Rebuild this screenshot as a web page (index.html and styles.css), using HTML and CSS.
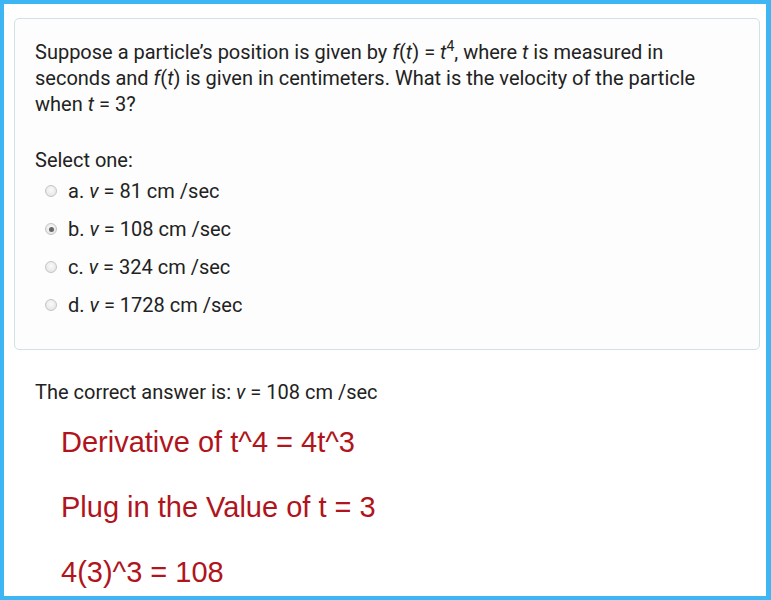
FILE: index.html
```html
<!DOCTYPE html>
<html>
<head>
<meta charset="utf-8">
<link rel="stylesheet" href="styles.css">
</head>
<body>
<div class="frame">
  <div class="card">
    <p class="question">Suppose a particle’s position is given by <i>f</i>(<i>t</i>) = <i>t</i><sup>4</sup>, where <i>t</i> is measured in seconds and <i>f</i>(<i>t</i>) is given in centimeters. What is the velocity of the particle when <i>t</i> = 3?</p>
    <div class="prompt">Select one:</div>
    <div class="options">
      <div class="opt"><span class="radio"></span><span>a. <i>v</i> = 81 cm /sec</span></div>
      <div class="opt"><span class="radio checked"></span><span>b. <i>v</i> = 108 cm /sec</span></div>
      <div class="opt"><span class="radio"></span><span>c. <i>v</i> = 324 cm /sec</span></div>
      <div class="opt"><span class="radio"></span><span>d. <i>v</i> = 1728 cm /sec</span></div>
    </div>
  </div>
  <div class="answer">The correct answer is: <i>v</i> = 108 cm /sec</div>
  <div class="work">
    <div class="step">Derivative of t^4 = 4t^3</div>
    <div class="step">Plug in the Value of t = 3</div>
    <div class="step">4(3)^3 = 108</div>
  </div>
</div>
</body>
</html>
```
FILE: styles.css
```css
html, body {
  margin: 0;
  padding: 0;
  background: #ffffff;
}
.frame {
  width: 771px;
  height: 600px;
  box-sizing: border-box;
  border-style: solid;
  border-color: #3db6f3;
  border-width: 4px 5px 4px 4px;
  background: #ffffff;
  font-family: Roboto, "Liberation Sans", sans-serif;
  color: #222222;
  overflow: hidden;
}
.card {
  margin: 14px 6px 0 10px;
  height: 332px;
  box-sizing: border-box;
  border: 1px solid #cfe2e6;
  border-radius: 5px;
  background: #fdfdfd;
  padding: 20px 20px 0 20px;
}
.question {
  margin: 0;
  font-size: 20px;
  line-height: 26px;
}
.question sup {
  font-size: 14px;
  line-height: 0;
  vertical-align: 8px;
}
.prompt {
  margin-top: 30px;
  font-size: 20px;
  line-height: 26px;
}
.options {
  display: flex;
  flex-direction: column;
  gap: 12px;
  margin-top: 5px;
  padding-left: 10px;
}
.opt {
  display: flex;
  align-items: center;
  gap: 11px;
  font-size: 20px;
  line-height: 26px;
}
.radio {
  width: 12px;
  height: 12px;
  border-radius: 50%;
  box-sizing: border-box;
  border: 1px solid #c4c4c4;
  background: radial-gradient(circle at 50% 40%, #fafafa, #e0e0e0);
  position: relative;
}
.radio.checked::after {
  content: "";
  position: absolute;
  left: 2.5px;
  top: 2.5px;
  width: 5px;
  height: 5px;
  border-radius: 50%;
  background: #666666;
}
.answer {
  margin: 29px 0 0 31px;
  font-size: 20px;
  line-height: 26px;
}
.work {
  margin: 20px 0 0 57px;
  display: flex;
  flex-direction: column;
  gap: 31px;
  font-family: "Liberation Sans", Arial, sans-serif;
  color: #b0141c;
  font-size: 29px;
  line-height: 34px;
}
```
